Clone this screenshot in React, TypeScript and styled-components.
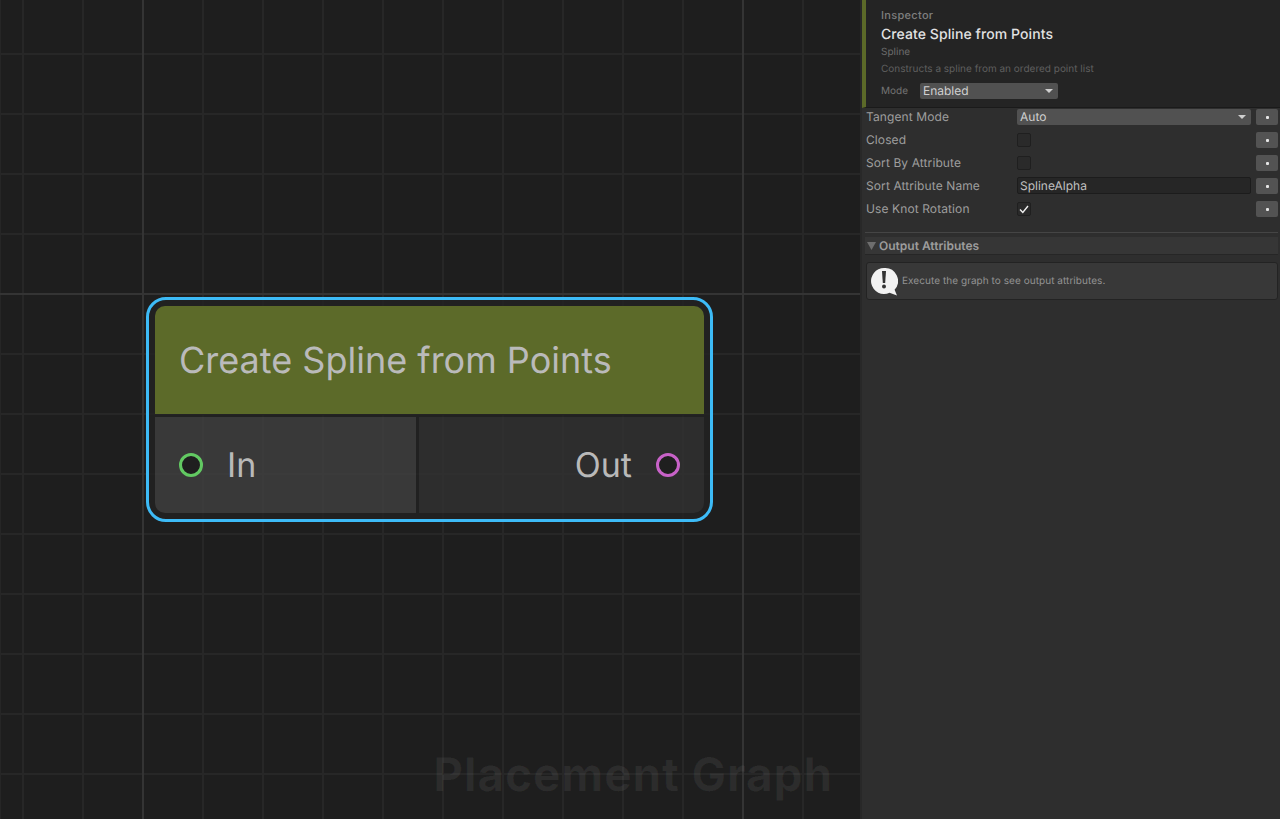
import React from "react";
import styled, { createGlobalStyle } from "styled-components";

const Global = createGlobalStyle`
  html, body { margin: 0; padding: 0; background: #1e1e1e; }
  #root { width: 1280px; height: 819px; overflow: hidden; }
  * { box-sizing: border-box; }
`;

const Page = styled.div`
  display: flex;
  width: 1280px;
  height: 819px;
  font-family: Inter, "Liberation Sans", sans-serif;
  text-rendering: geometricPrecision;
`;

const Canvas = styled.div`
  position: relative;
  width: 860px;
  height: 819px;
  overflow: hidden;
  background-color: #1e1e1e;
  background-image:
    linear-gradient(90deg, transparent 142px, #343434 142px, #343434 144px, transparent 144px),
    linear-gradient(90deg, transparent 742px, #343434 742px, #343434 744px, transparent 744px),
    linear-gradient(180deg, transparent 293px, #343434 293px, #343434 295px, transparent 295px),
    linear-gradient(90deg, #262626 0, #262626 1px, transparent 1px),
    linear-gradient(90deg, transparent 22px, #272727 22px, #272727 24px, transparent 24px),
    linear-gradient(180deg, transparent 53px, #272727 53px, #272727 55px, transparent 55px);
  background-size: 100% 100%, 100% 100%, 100% 100%, 100% 100%, 60px 100%, 100% 60px;
`;

const Watermark = styled.div`
  position: absolute;
  right: 27px;
  bottom: 16px;
  font-size: 46px;
  line-height: 56px;
  font-weight: 700;
  letter-spacing: 0.9px;
  color: rgba(255, 255, 255, 0.06);
  white-space: nowrap;
`;

const Selection = styled.div`
  position: absolute;
  left: 146px;
  top: 297px;
  width: 567px;
  height: 225px;
  padding: 6px;
  border: 3px solid #3dbbf7;
  border-radius: 20px;
  background: rgba(34, 34, 34, 0.7);
`;

const Node = styled.div`
  display: grid;
  grid-template-columns: 261px 1fr;
  grid-template-rows: 108px 1fr;
  row-gap: 3px;
  column-gap: 3px;
  height: 100%;
  border-radius: 10px;
  overflow: hidden;
`;

const NodeHeader = styled.div`
  grid-column: 1 / 3;
  display: flex;
  align-items: center;
  padding: 0 24px;
  background: #5c6a29;
  color: #bababa;
  font-size: 36px;
`;

const PortCell = styled.div<{ $out?: boolean }>`
  display: flex;
  align-items: center;
  gap: 24px;
  justify-content: ${(p) => (p.$out ? "flex-end" : "flex-start")};
  padding: ${(p) => (p.$out ? "0 24px 0 0" : "0 0 0 24px")};
  background: ${(p) => (p.$out ? "rgba(255, 255, 255, 0.054)" : "rgba(255, 255, 255, 0.108)")};
  color: #b9b9b9;
  font-size: 34px;
`;

const Port = styled.span<{ $color: string }>`
  width: 24px;
  height: 24px;
  border-radius: 50%;
  border: 3px solid ${(p) => p.$color};
  background: #1f1f1f;
`;

const Panel = styled.aside`
  width: 420px;
  height: 819px;
  display: flex;
  flex-direction: column;
  background: #2e2e2e;
  border-left: 2px solid #282828;
  color: #a6a6a6;
  font-size: 12px;
`;

const Head = styled.header`
  height: 108px;
  padding: 9px 0 0 15px;
  background: #242424;
  border-left: 4px solid #5c6a29;
  border-bottom: 1px solid #1a1a1a;
`;

const Eyebrow = styled.div`
  font-size: 11px;
  line-height: 13px;
  font-weight: 500;
  letter-spacing: 0.3px;
  color: #7f7f7f;
`;

const HeadTitle = styled.div`
  margin-top: 4px;
  font-size: 14px;
  line-height: 18px;
  font-weight: 500;
  letter-spacing: 0.08px;
  color: #e2e2e2;
`;

const Category = styled.div`
  margin-top: 1px;
  font-size: 10px;
  line-height: 14px;
  color: #6c6c6c;
`;

const Description = styled.div`
  margin-top: 3px;
  font-size: 10px;
  line-height: 14px;
  color: #5f5f5f;
`;

const ModeRow = styled.div`
  display: flex;
  align-items: center;
  gap: 12px;
  margin-top: 7px;
  font-size: 10px;
  color: #747474;
`;

const Select = styled.div<{ $width?: number }>`
  display: flex;
  align-items: center;
  justify-content: space-between;
  width: ${(p) => (p.$width ? `${p.$width}px` : "100%")};
  height: 16px;
  padding: 0 5px 1px 3px;
  border-radius: 2px;
  background: #515151;
  color: #d0d0d0;
  font-size: 12px;
`;

const Caret = styled.svg`
  width: 8px;
  height: 4px;
  fill: #cfcfcf;
`;

const SectionCaret = styled.svg`
  width: 9px;
  height: 8px;
  flex: none;
  fill: #6e6e6e;
`;

const Rows = styled.div`
  display: flex;
  flex-direction: column;
  gap: 7px;
  padding: 1px 0 0 4px;
`;

const Row = styled.div`
  display: grid;
  grid-template-columns: 146px 234px 22px;
  column-gap: 5px;
  align-items: center;
  height: 16px;
`;

const RowLabel = styled.span`
  margin-top: -1px;
  font-size: 12px;
  letter-spacing: 0.1px;
  color: #9e9e9e;
`;

const Check = styled.span`
  display: flex;
  align-items: center;
  justify-content: center;
  width: 14px;
  height: 14px;
  border-radius: 2px;
  background: #2a2a2a;
  border: 1px solid #1f1f1f;
`;

const TextField = styled.div`
  height: 17px;
  margin-top: -1px;
  padding: 0 2px;
  line-height: 15px;
  border-radius: 2px;
  background: #262626;
  border: 1px solid #1c1c1c;
  color: #c0c0c0;
  font-size: 12px;
`;

const Mini = styled.button`
  display: flex;
  align-items: center;
  justify-content: center;
  width: 22px;
  height: 16px;
  padding: 0;
  border: 0;
  border-radius: 2px;
  background: #535353;
  &::after {
    content: "";
    width: 3px;
    height: 3px;
    background: #e6e6e6;
    border-radius: 1px;
  }
`;

const Section = styled.section`
  margin: 15px 2px 0 3px;
  border-top: 1px solid #454545;
  padding-top: 4px;
`;

const SectionBar = styled.div`
  display: flex;
  align-items: center;
  gap: 3px;
  height: 18px;
  padding-left: 2px;
  background: #363636;
  border-bottom: 1px solid #262626;
  color: #9c9c9c;
  font-size: 12px;
  font-weight: 600;
`;

const Notice = styled.div`
  display: flex;
  align-items: center;
  gap: 4px;
  height: 38px;
  margin: 7px 0 0 1px;
  padding: 0 0 0 4px;
  border: 1px solid #232323;
  border-radius: 3px;
  background: #383838;
  color: #929292;
  font-size: 10px;
  letter-spacing: 0.05px;
`;

const Icon = styled.svg`
  width: 27px;
  height: 29px;
  flex: none;
`;

const rows = [
  { label: "Tangent Mode", kind: "select", value: "Auto" },
  { label: "Closed", kind: "check" },
  { label: "Sort By Attribute", kind: "check" },
  { label: "Sort Attribute Name", kind: "text", value: "SplineAlpha" },
  { label: "Use Knot Rotation", kind: "check", on: true },
];

export default function App() {
  return (
    <Page>
      <Global />
      <Canvas>
        <Watermark>Placement Graph</Watermark>
        <Selection>
          <Node>
            <NodeHeader>Create Spline from Points</NodeHeader>
            <PortCell>
              <Port $color="#62c962" />
              In
            </PortCell>
            <PortCell $out>
              Out
              <Port $color="#c862c8" />
            </PortCell>
          </Node>
        </Selection>
      </Canvas>
      <Panel>
        <Head>
          <Eyebrow>Inspector</Eyebrow>
          <HeadTitle>Create Spline from Points</HeadTitle>
          <Category>Spline</Category>
          <Description>Constructs a spline from an ordered point list</Description>
          <ModeRow>
            Mode
            <Select $width={138}>
              Enabled
              <Caret viewBox="0 0 8 4"><path d="M0 0h8L4 4z" /></Caret>
            </Select>
          </ModeRow>
        </Head>
        <Rows>
          {rows.map((r) => (
            <Row key={r.label}>
              <RowLabel>{r.label}</RowLabel>
              {r.kind === "select" && (
                <Select>
                  {r.value}
                  <Caret viewBox="0 0 8 4"><path d="M0 0h8L4 4z" /></Caret>
                </Select>
              )}
              {r.kind === "check" && (
                <Check>
                  {r.on && (
                    <svg width="10" height="9" viewBox="0 0 10 9">
                      <path d="M1 4.5L3.8 7.5 9 1" fill="none" stroke="#f0f0f0" strokeWidth="1.4" />
                    </svg>
                  )}
                </Check>
              )}
              {r.kind === "text" && <TextField>{r.value}</TextField>}
              <Mini />
            </Row>
          ))}
        </Rows>
        <Section>
          <SectionBar>
            <SectionCaret viewBox="0 0 9 8"><path d="M0 0h9L4.5 8z" /></SectionCaret>
            Output Attributes
          </SectionBar>
          <Notice>
            <Icon viewBox="0 0 27 29">
              <path d="M13 1a13 13 0 1 0 5.5 24.8L26 28.5l-2.4-5.8A13 13 0 0 0 13 1z" fill="#f2f2f2" />
              <path d="M11 4h4l-.8 12h-2.4z" fill="#333" />
              <circle cx="13" cy="19.5" r="2" fill="#333" />
            </Icon>
            Execute the graph to see output attributes.
          </Notice>
        </Section>
      </Panel>
    </Page>
  );
}
